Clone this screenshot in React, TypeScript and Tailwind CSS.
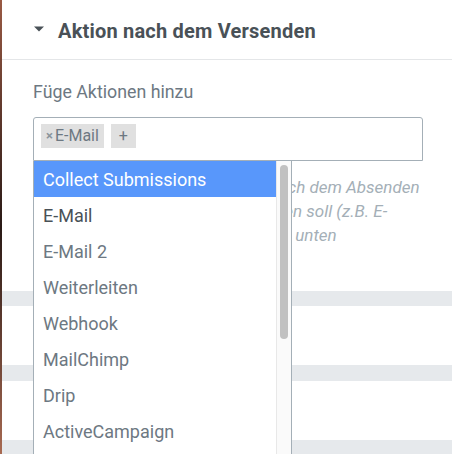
import React from 'react';

const options = [
    'Collect Submissions',
    'E-Mail',
    'E-Mail 2',
    'Weiterleiten',
    'Webhook',
    'MailChimp',
    'Drip',
    'ActiveCampaign',
    'GetResponse',
];

const App: React.FC = () => {
    return (
        <div className="relative flex w-[452px] h-[454px] overflow-hidden bg-white font-['Roboto',sans-serif]">
            {/* Background edge peeking from the editor */}
            <div className="w-[2px] shrink-0 bg-gradient-to-b from-[#9a5a44] via-[#2a1a16] to-[#a86a52]"></div>

            <div className="flex-1 flex flex-col bg-white">
                {/* Section header */}
                <header className="h-[60px] shrink-0 flex items-center gap-[13px] pl-[31px] border-b border-[#e4e6e8]">
                    <svg width="12" height="8" viewBox="0 0 12 8" className="mt-[-1px]">
                        <path d="M1 1.5h10L6 6.5z" fill="#495157" />
                    </svg>
                    <h2 className="mt-[2px] text-[20px] font-bold tracking-[0.2px] text-[#495157]">Aktion nach dem Versenden</h2>
                </header>

                <div className="h-[231px] shrink-0 pl-[31px] pr-[29px] pt-[19px]">
                    <label className="block text-[17.8px] leading-[26px] text-[#6d7882]">Füge Aktionen hinzu</label>
                    <div className="mt-[12px] h-[44px] border border-[#a4afb7] rounded-t-[3px] flex items-start gap-[7px] pl-[7px] pt-[6px]">
                        <span className="h-[24px] flex items-center gap-[2px] px-[5px] bg-[#e0e0e0] text-[16px] text-[#6d7882]">
                            <span className="text-[13px] font-bold text-[#8a949c]">×</span>E-Mail
                        </span>
                        <span className="h-[24px] w-[25px] flex items-center justify-center bg-[#e0e0e0] text-[16px] text-[#6d7882]">+</span>
                    </div>
                    <p className="mt-[14px] text-[17px] leading-[24px] italic text-[#a4afb7] whitespace-nowrap">
                        Wähle hier die Aktionen aus, die nach dem Absenden<br />
                        deines Formulars ausgeführt werden soll (z.B. E-<br />
                        Mail senden). Andere Einstellungen unten
                    </p>
                </div>

                {/* Collapsed sections below */}
                <div className="h-[15px] shrink-0 bg-[#e6e9ec]"></div>
                <div className="h-[59px] shrink-0 bg-white"></div>
                <div className="h-[16px] shrink-0 bg-[#e6e9ec]"></div>
                <div className="h-[59px] shrink-0 bg-white"></div>
                <div className="h-[16px] shrink-0 bg-[#e6e9ec]"></div>
            </div>

            {/* Open dropdown */}
            <div className="absolute left-[33px] top-[161px] w-[259px] h-[320px] flex bg-white border-x border-[#a4afb7]">
                <ul className="flex-1">
                    {options.map((o, i) => (
                        <li
                            key={o}
                            className={`h-[36px] flex items-center pl-[9px] text-[18px] ${
                                i === 0 ? 'bg-[#5897fb] text-white' : i === 1 ? 'text-[#495157]' : 'text-[#6d7882]'
                            }`}
                        >
                            {o}
                        </li>
                    ))}
                </ul>
                <div className="w-[15px] shrink-0 bg-[#fafafa] border-l border-[#e8e8e8] pt-[4px] pl-[3px]">
                    <div className="w-[8px] h-[174px] rounded-full bg-[#c1c1c1]"></div>
                </div>
            </div>
        </div>
    );
};

export default App;
